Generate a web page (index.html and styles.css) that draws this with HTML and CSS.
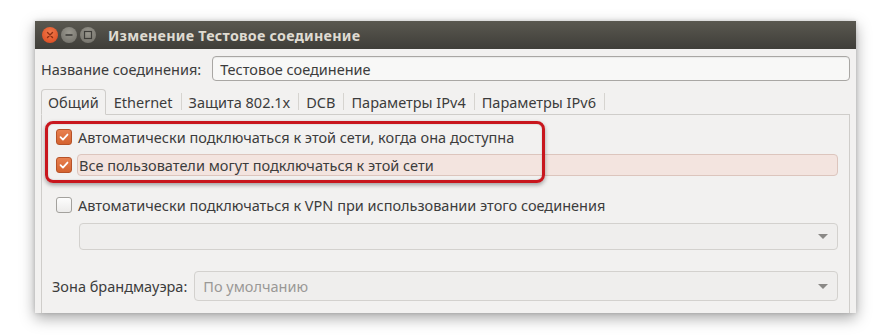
FILE: index.html
```html
<!DOCTYPE html>
<html lang="ru">
<head>
<meta charset="utf-8">
<title>Изменение Тестовое соединение</title>
<link rel="stylesheet" href="styles.css">
</head>
<body>
<div class="window">
  <div class="titlebar">
    <div class="wbtns">
      <span class="wbtn close"><svg width="16" height="16" viewBox="0 0 16 16"><path d="M5.5 5.5 L10.5 10.5 M10.5 5.5 L5.5 10.5" stroke="#8e2f12" stroke-width="1.4" stroke-linecap="round"/></svg></span>
      <span class="wbtn"><svg width="16" height="16" viewBox="0 0 16 16"><path d="M4.5 8 H11.5" stroke="#3e3d39" stroke-width="1.6"/></svg></span>
      <span class="wbtn"><svg width="16" height="16" viewBox="0 0 16 16"><rect x="4.5" y="4.5" width="7" height="7" fill="none" stroke="#3e3d39" stroke-width="1.2"/></svg></span>
    </div>
    <div class="title">Изменение Тестовое соединение</div>
  </div>
  <div class="content">
    <div class="namerow">
      <label class="lbl">Название соединения:</label>
      <div class="entry">Тестовое соединение</div>
    </div>
    <div class="tabs">
      <div class="tab active">Общий</div>
      <div class="tab">Ethernet</div>
      <div class="tab sep">Защита 802.1x</div>
      <div class="tab sep">DCB</div>
      <div class="tab sep">Параметры IPv4</div>
      <div class="tab sep">Параметры IPv6</div>
      <div class="tab sep last"></div>
    </div>
    <div class="panel">
      <div class="highlight"></div>
      <div class="row">
        <span class="cb on"><svg width="16" height="16" viewBox="0 0 16 16"><path d="M4 8.2 L6.8 11 L12 5.2" fill="none" stroke="#fff" stroke-width="2" stroke-linecap="round" stroke-linejoin="round"/></svg></span>
        <span class="txt">Автоматически подключаться к этой сети, когда она доступна</span>
      </div>
      <div class="row">
        <span class="cb on"><svg width="16" height="16" viewBox="0 0 16 16"><path d="M4 8.2 L6.8 11 L12 5.2" fill="none" stroke="#fff" stroke-width="2" stroke-linecap="round" stroke-linejoin="round"/></svg></span>
        <span class="txt focus">Все пользователи могут подключаться к этой сети</span>
      </div>
      <div class="row vpn">
        <span class="cb"></span>
        <span class="txt">Автоматически подключаться к VPN при использовании этого соединения</span>
      </div>
      <div class="combo wide"><span class="ctext"></span><span class="arrow"></span></div>
      <div class="fwrow">
        <label class="lbl">Зона брандмауэра:</label>
        <div class="combo grow"><span class="ctext">По умолчанию</span><span class="arrow"></span></div>
      </div>
    </div>
  </div>
</div>
</body>
</html>
```

FILE: styles.css
```css
* { box-sizing: border-box; }
html, body { margin: 0; padding: 0; background: #fff; }
body {
  font-family: "Noto Sans", "Open Sans", sans-serif;
  font-size: 14.5px;
  color: #3c3c3c;
  width: 879px;
  height: 336px;
  overflow: hidden;
}
.window {
  margin: 21px 0 0 35px;
  width: 821px;
  height: 292px;
  background: #f2f1f0;
  box-shadow: 0 5px 14px rgba(0,0,0,0.35), 0 0 4px rgba(0,0,0,0.15);
  display: flex;
  flex-direction: column;
}
.titlebar {
  height: 28px;
  background: linear-gradient(#5a5850, #3f3e39);
  display: flex;
  align-items: center;
  padding-left: 7px;
}
.wbtns { display: flex; gap: 3px; }
.wbtn {
  width: 16px; height: 16px; border-radius: 50%;
  background: radial-gradient(circle at 50% 35%, #9a988f, #6e6c65);
  display: block;
}
.wbtn svg { display: block; }
.wbtn.close { background: radial-gradient(circle at 50% 35%, #f17a4b, #d9461c); }
.title {
  margin-left: 12px;
  color: #dfdbd2;
  font-weight: bold;
  font-size: 14.3px;
  letter-spacing: 0.25px;
}
.content {
  flex: 1;
  display: flex;
  flex-direction: column;
  padding: 7px 6px 0 6px;
}
.namerow { display: flex; align-items: center; gap: 11px; }
.lbl { white-space: nowrap; }
.entry {
  flex: 1;
  height: 25px;
  border: 1px solid #a9a7a4;
  border-radius: 4px;
  background: #f8f8f7;
  padding-left: 7px;
  display: flex;
  align-items: center;
  box-shadow: inset 0 1px 1px rgba(0,0,0,0.06);
}
.tabs {
  margin-top: 8px;
  display: flex;
  height: 26px;
  align-items: flex-end;
}
.tab {
  height: 26px;
  padding: 0 8px;
  display: flex;
  align-items: center;
  border-bottom: 1px solid #cfcdca;
  position: relative;
}
.tab.sep::before {
  content: "";
  position: absolute;
  left: 0; top: 4px; bottom: 4px;
  width: 1px;
  background: #d6d4d0;
}
.tab.active {
  border: 1px solid #cfcdca;
  border-bottom: 1px solid #f2f1f0;
  border-radius: 4px 4px 0 0;
  padding: 0 6px;
}
.tab.last { flex: 1; padding: 0; }
.panel {
  flex: 1;
  border: 1px solid #cfcdca;
  border-top: none;
  border-bottom: none;
  padding: 11px 11px 0 13px;
  display: flex;
  flex-direction: column;
  position: relative;
}
.row { display: flex; align-items: center; gap: 6px; height: 22px; }
.row + .row { margin-top: 6px; }
.row.vpn { margin-top: 18px; }
.cb {
  width: 16px; height: 16px; flex: none;
  border-radius: 3px;
  border: 1px solid #a3a19d;
  background: linear-gradient(#fdfdfd, #ecebea);
  display: flex; align-items: center; justify-content: center;
  margin-left: 1px;
}
.cb.on {
  border-color: #b65228;
  background: linear-gradient(#e8804f, #d4622f);
}
.cb svg { display: block; }
.txt { white-space: nowrap; }
.txt.focus {
  flex: 1;
  height: 22px;
  display: flex; align-items: center;
  background: #f3e4df;
  border: 1px solid #dcc5bd;
  border-radius: 4px;
  padding-left: 1px;
  margin-left: -1px;
}
.combo {
  height: 27px;
  border: 1px solid #d3d1ce;
  border-radius: 4px;
  background: #efeeed;
  display: flex;
  align-items: center;
  padding: 0 9px 0 8px;
}
.combo.wide { margin: 7px 0 0 24px; }
.ctext { flex: 1; color: #9a9896; }
.arrow {
  width: 0; height: 0;
  border-left: 5px solid transparent;
  border-right: 5px solid transparent;
  border-top: 5px solid #8a8886;
}
.fwrow {
  display: flex; align-items: center; gap: 7px;
  margin-top: 21px;
  margin-left: -3px;
}
.fwrow .combo { flex: 1; height: 30px; }
.highlight {
  position: absolute;
  left: 3px; top: 6px;
  width: 500px; height: 62px;
  border: 3px solid #c8161d;
  border-radius: 8px;
  box-shadow: 0 2px 4px rgba(0,0,0,0.35), inset 0 0 2px rgba(0,0,0,0.2);
  pointer-events: none;
  z-index: 2;
}
```
